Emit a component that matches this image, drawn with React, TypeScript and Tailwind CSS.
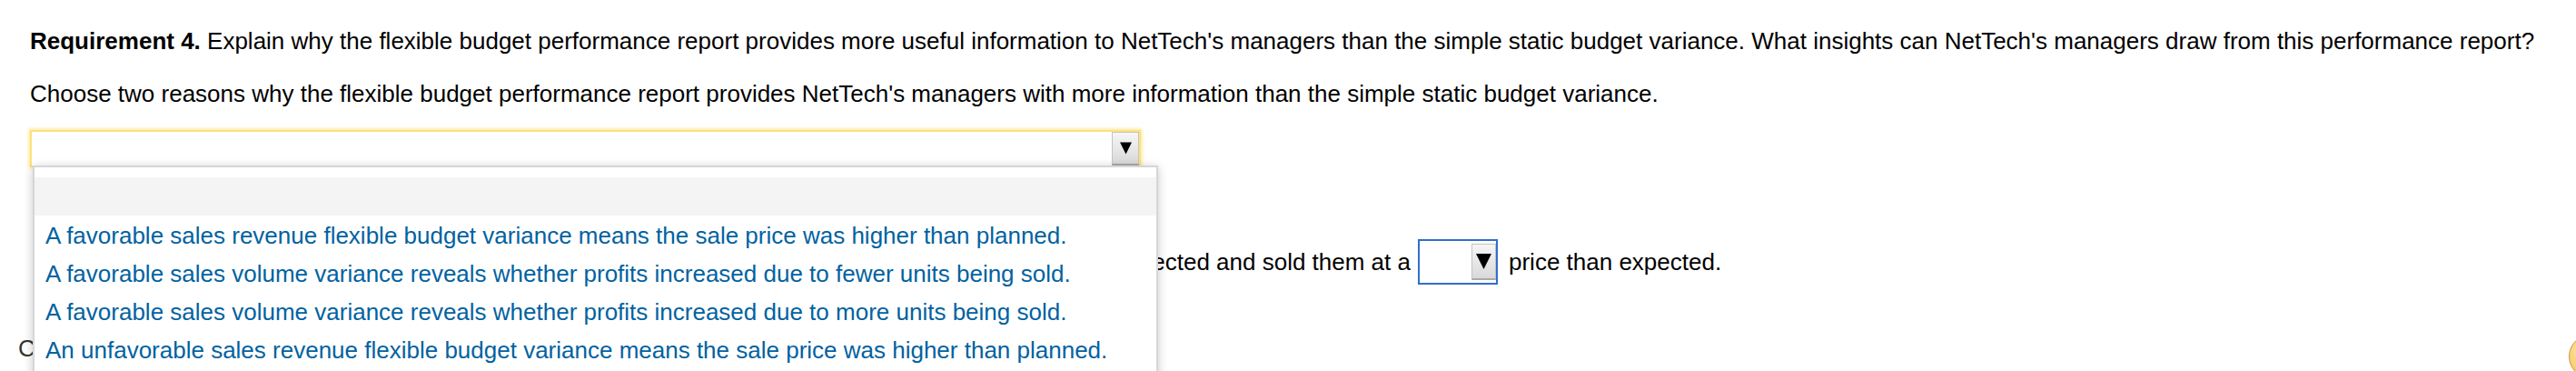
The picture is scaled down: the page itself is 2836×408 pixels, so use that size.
import React from "react";

function Tri({ w, h }: { w: number; h: number }) {
  return (
    <svg width={w} height={h} viewBox="0 0 10 10" className="block">
      <polygon points="0,0 10,0 5,10" fill="#000" />
    </svg>
  );
}

const options = [
  "A favorable sales revenue flexible budget variance means the sale price was higher than planned.",
  "A favorable sales volume variance reveals whether profits increased due to fewer units being sold.",
  "A favorable sales volume variance reveals whether profits increased due to more units being sold.",
  "An unfavorable sales revenue flexible budget variance means the sale price was higher than planned.",
];

export default function App() {
  return (
    <div className="relative w-[2836px] h-[408px] overflow-hidden bg-white text-black font-['Liberation_Sans',Arial,sans-serif] text-[26px]">
      <div className="pl-[33px] pt-[30px]">
        <p className="leading-[30px] whitespace-nowrap">
          <b>Requirement 4.</b> Explain why the flexible budget performance report provides more useful information to NetTech's managers than the simple static budget variance. What insights can NetTech's managers draw from this performance report?
        </p>
        <p className="mt-[28px] leading-[30px] whitespace-nowrap">
          Choose two reasons why the flexible budget performance report provides NetTech's managers with more information than the simple static budget variance.
        </p>

        <div className="relative mt-[25px] w-[1223px] h-[41px] border-2 border-[#fde27a] shadow-[0_0_4px_1px_#ffe585] bg-white flex justify-end">
          <div className="w-[30px] h-[37px] bg-gradient-to-b from-[#f6f6f6] to-[#d9d9d9] border border-[#c4c4c4] border-b-2 border-b-[#a9a9a9] flex items-center justify-center">
            <Tri w={13} h={14} />
          </div>

          <div className="absolute left-[1px] top-[37px] w-[1239px] h-[240px] bg-white border-2 border-b-0 border-[#d6d6d6] shadow-[0_2px_10px_rgba(0,0,0,0.22)] z-10 pt-[11px]">
            <div className="h-[42px] bg-[#f4f4f4]" />
            {options.map((o) => (
              <div key={o} className="h-[42px] leading-[44px] pl-[12px] text-[#0062a1] whitespace-nowrap">
                {o}
              </div>
            ))}
          </div>
        </div>

        <div className="mt-[79px] flex items-center h-[50px] whitespace-nowrap">
          <div className="w-[1520px] flex justify-end overflow-hidden">
            <span className="shrink-0">The flexible budget performance report shows that NetTech sold more units than expected and sold them at a</span>
          </div>
          <div className="ml-[8px] w-[88px] h-[50px] border-2 border-[#2f6fcb] bg-white flex justify-end items-center">
            <div className="w-[27px] h-[40px] bg-gradient-to-b from-[#f6f6f6] to-[#d9d9d9] border border-[#c4c4c4] border-b-2 border-b-[#a9a9a9] flex items-center justify-center">
              <Tri w={17} h={17} />
            </div>
          </div>
          <span className="ml-[12px]">price than expected.</span>
        </div>
      </div>

      <p className="pl-[20px] mt-[55px] leading-[30px] text-[#333] whitespace-nowrap">Choose the correct statements.</p>

      <div className="absolute left-[2828px] top-[368px] w-[48px] h-[48px] rounded-full border border-[#d09534] bg-[radial-gradient(circle_at_40%_35%,#fde9ae,#f2bb4f)]" />
    </div>
  );
}
